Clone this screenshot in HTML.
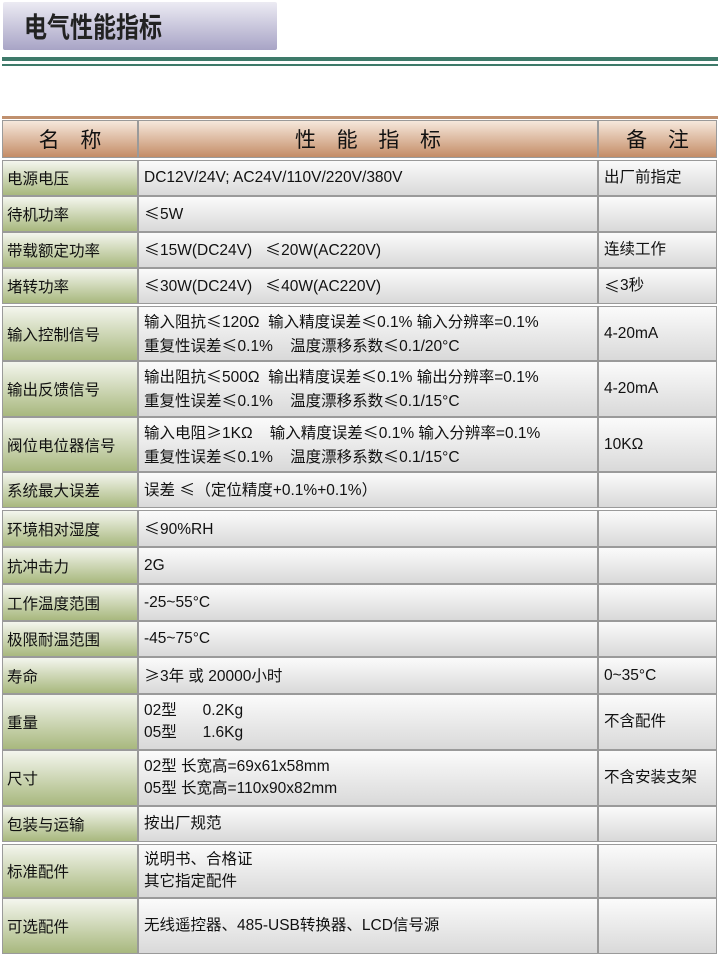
<!DOCTYPE html>
<html><head><meta charset="utf-8"><style>
*{margin:0;padding:0;box-sizing:border-box}
body{width:720px;height:955px;background:#fff;position:relative;overflow:hidden;font-family:"Liberation Sans Narrow","Liberation Sans","Noto Sans CJK SC",sans-serif;color:#111}
.title{position:absolute;left:3px;top:2px;width:274px;height:48px;background:linear-gradient(#ecebf3,#a8a4c6);border-radius:2px;color:#222}
.title span{position:absolute;left:21px;top:9px;font:bold 23px/28px "Noto Sans CJK SC",sans-serif;letter-spacing:0;transform:scaleY(1.2);transform-origin:0 50%}
.l1{position:absolute;left:2px;width:716px;top:57px;height:4px;background:#3e7a6a}
.l2{position:absolute;left:2px;width:716px;top:64px;height:2px;background:#3e7a6a}
.l3{position:absolute;left:2px;width:716px;top:116px;height:3px;background:#c0906e}
.c{position:absolute;border:1px solid #9a9a9a;font-size:15.5px;line-height:22px;display:flex;align-items:center;padding-left:5px;white-space:nowrap}
.a{left:2px;width:136px;background:linear-gradient(#f4f6ee,#a8b87e);padding-left:4px;font-family:"Noto Sans CJK SC",sans-serif;font-size:15.5px}
.b{left:138px;width:460px;background:linear-gradient(#fbfbfb,#d9d9d9)}
.d{left:598px;width:119px;background:linear-gradient(#fbfbfb,#d9d9d9)}
.h{background:linear-gradient(#f6e8dc,#c48c66);justify-content:center;font-family:"Noto Sans CJK SC",sans-serif;font-size:21px;letter-spacing:8px;padding-left:8px}
.s{font-family:"Noto Sans CJK SC",sans-serif;display:inline-block;width:16px;text-align:center}
</style></head><body>
<div class="title"><span>电气性能指标</span></div>
<div class="l1"></div><div class="l2"></div><div class="l3"></div>
<div id="t"></div>
<script>
var R=[
[120,38,'名 称','性 能 指 标','备 注',1],
[160,36,'电源电压','DC12V/24V; AC24V/110V/220V/380V','出厂前指定'],
[196,36,'待机功率','≤5W',''],
[232,36,'带载额定功率','≤15W(DC24V)&nbsp;&nbsp;&nbsp;≤20W(AC220V)','连续工作'],
[268,36,'堵转功率','≤30W(DC24V)&nbsp;&nbsp;&nbsp;≤40W(AC220V)','≤3秒'],
[306,55,'输入控制信号','输入阻抗≤120Ω&nbsp;&nbsp;输入精度误差≤0.1%&nbsp;输入分辨率=0.1%<br>重复性误差≤0.1%&nbsp;&nbsp;&nbsp;&nbsp;温度漂移系数≤0.1/20°C','4-20mA'],
[361,56,'输出反馈信号','输出阻抗≤500Ω&nbsp;&nbsp;输出精度误差≤0.1%&nbsp;输出分辨率=0.1%<br>重复性误差≤0.1%&nbsp;&nbsp;&nbsp;&nbsp;温度漂移系数≤0.1/15°C','4-20mA'],
[417,55,'阀位电位器信号','输入电阻≥1KΩ&nbsp;&nbsp;&nbsp;&nbsp;输入精度误差≤0.1%&nbsp;输入分辨率=0.1%<br>重复性误差≤0.1%&nbsp;&nbsp;&nbsp;&nbsp;温度漂移系数≤0.1/15°C','10KΩ'],
[472,36,'系统最大误差','误差 ≤（定位精度+0.1%+0.1%）',''],
[510,37,'环境相对湿度','≤90%RH',''],
[547,37,'抗冲击力','2G',''],
[584,37,'工作温度范围','-25~55°C',''],
[621,36,'极限耐温范围','-45~75°C',''],
[657,37,'寿命','≥3年 或 20000小时','0~35°C'],
[694,56,'重量','02型&nbsp;&nbsp;&nbsp;&nbsp;&nbsp;&nbsp;0.2Kg<br>05型&nbsp;&nbsp;&nbsp;&nbsp;&nbsp;&nbsp;1.6Kg','不含配件'],
[750,56,'尺寸','02型 长宽高=69x61x58mm<br>05型 长宽高=110x90x82mm','不含安装支架'],
[806,36,'包装与运输','按出厂规范',''],
[844,54,'标准配件','说明书、合格证<br>其它指定配件',''],
[898,56,'可选配件','无线遥控器、485-USB转换器、LCD信号源','']];
function f(t){return t.replace(/([≤≥])/g,'<span class="s">$1</span>');}
var h='';R.forEach(function(r){var s='top:'+r[0]+'px;height:'+r[1]+'px';var x=r[5]?' h':'';
h+='<div class="c a'+x+'" style="'+s+'">'+r[2]+'</div><div class="c b'+x+'" style="'+s+'"><div>'+f(r[3])+'</div></div><div class="c d'+x+'" style="'+s+'">'+f(r[4])+'</div>';});
document.getElementById('t').innerHTML=h;
</script>
</body></html>
